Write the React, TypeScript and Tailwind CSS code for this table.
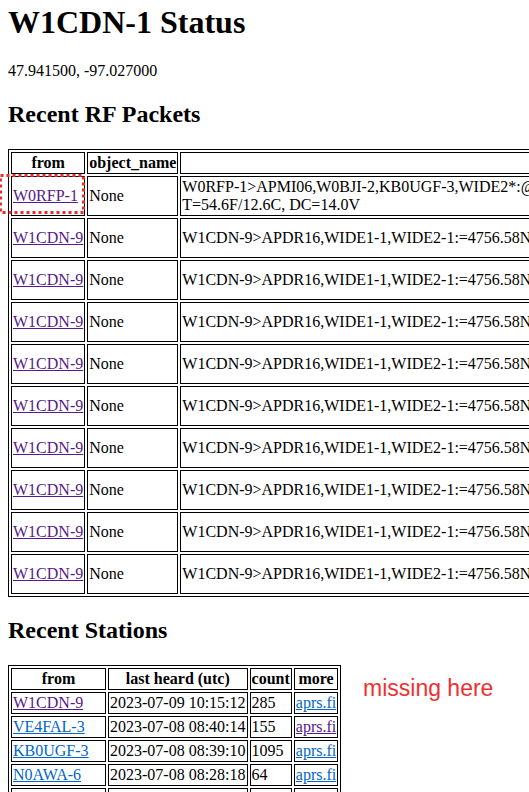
import React from "react";

type Packet = { from: string; visited: boolean; object: string; lines: string[] };

const w1cdn = "W1CDN-9>APDR16,WIDE1-1,WIDE2-1:=4756.58N/09701.62W$/A=000830 https://aprsdroid.org/";

const packets: Packet[] = [
    {
        from: "W0RFP-1",
        visited: true,
        object: "None",
        lines: [
            "W0RFP-1>APMI06,W0BJI-2,KB0UGF-3,WIDE2*:@091012z4752.35N/09658.42W_270/003g008t055r000p000",
            "T=54.6F/12.6C, DC=14.0V",
        ],
    },
    ...Array.from({ length: 9 }, () => ({ from: "W1CDN-9", visited: true, object: "None", lines: [w1cdn] })),
];

const stations = [
    { call: "W1CDN-9", heard: "2023-07-09 10:15:12", count: "285", callVisited: true, moreVisited: false },
    { call: "VE4FAL-3", heard: "2023-07-08 08:40:14", count: "155", callVisited: false, moreVisited: true },
    { call: "KB0UGF-3", heard: "2023-07-08 08:39:10", count: "1095", callVisited: false, moreVisited: false },
    { call: "N0AWA-6", heard: "2023-07-08 08:28:18", count: "64", callVisited: false, moreVisited: false },
    { call: "KD0BIK-10", heard: "2023-07-08 08:21:05", count: "37", callVisited: false, moreVisited: false },
    { call: "W0BJI-2", heard: "2023-07-08 08:02:51", count: "512", callVisited: false, moreVisited: false },
];

function Link({ visited, children }: { visited: boolean; children: React.ReactNode }) {
    return (
        <a href="#" className={visited ? "text-[#551a8b] underline" : "text-[#0066cc] underline"}>
            {children}
        </a>
    );
}

const cell = "border border-black p-px";
const head = "border border-black p-px font-bold text-center";

export default function App() {
    return (
        <div className="relative w-[529px] h-[792px] overflow-hidden bg-white text-black px-2 font-['Liberation_Serif','Times_New_Roman',serif] text-[16px] leading-[18px]">
            <h1 className="mt-[4px] mb-[21px] text-[32px] leading-[37px] font-bold whitespace-nowrap">W1CDN-1 Status</h1>
            <p className="mb-[20px]">47.941500, -97.027000</p>

            <h2 className="mb-[21px] text-[24px] leading-[28px] font-bold">Recent RF Packets</h2>
            <table className="border border-black border-separate border-spacing-[2px] whitespace-nowrap">
                <thead>
                    <tr>
                        <th className={head}>from</th>
                        <th className={head}>object_name</th>
                        <th className={head}></th>
                    </tr>
                </thead>
                <tbody>
                    {packets.map((p, i) => (
                        <tr key={i}>
                            <td className={`${cell} h-[40px]`}>
                                <Link visited={p.visited}>{p.from}</Link>
                            </td>
                            <td className={cell}>{p.object}</td>
                            <td className={cell}>
                                {p.lines.map((l, j) => (
                                    <div key={j}>{l}</div>
                                ))}
                            </td>
                        </tr>
                    ))}
                </tbody>
            </table>

            <h2 className="mt-[19px] mb-[21px] text-[24px] leading-[28px] font-bold">Recent Stations</h2>
            <table className="border border-black border-separate border-spacing-[2px] whitespace-nowrap">
                <thead>
                    <tr>
                        <th className={`${head} w-[95px]`}>from</th>
                        <th className={head}>last heard (utc)</th>
                        <th className={head}>count</th>
                        <th className={head}>more</th>
                    </tr>
                </thead>
                <tbody>
                    {stations.map((s) => (
                        <tr key={s.call}>
                            <td className={cell}>
                                <Link visited={s.callVisited}>{s.call}</Link>
                            </td>
                            <td className={cell}>{s.heard}</td>
                            <td className={cell}>{s.count}</td>
                            <td className={cell}>
                                <Link visited={s.moreVisited}>aprs.fi</Link>
                            </td>
                        </tr>
                    ))}
                </tbody>
            </table>

            {/* annotations drawn over the page */}
            <svg className="absolute left-[-1px] top-[174px]" width="86" height="40" viewBox="0 0 86 40">
                <rect x="1.5" y="1.5" width="83" height="37" fill="none" stroke="#ee2b2b" strokeWidth="3" strokeDasharray="3 3" />
            </svg>
            <div className="absolute left-[363px] top-[677px] text-[23px] leading-[23px] text-[#f03030] font-['Liberation_Sans',Arial,sans-serif] whitespace-nowrap">
                missing here
            </div>
        </div>
    );
}
